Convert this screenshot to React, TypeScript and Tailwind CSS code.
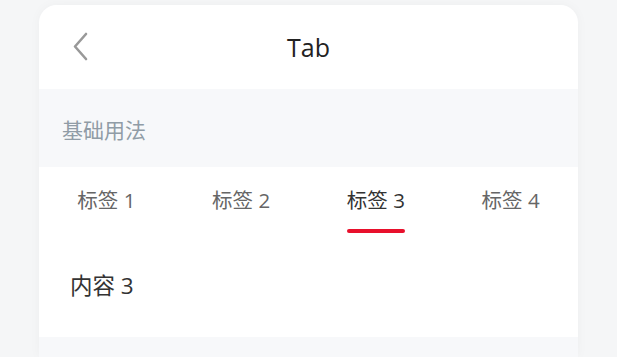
import { useState } from 'react'

const tabs = ['标签 1', '标签 2', '标签 3', '标签 4']

export default function App() {
  const [active, setActive] = useState(2)

  return (
    <div
      className="min-h-[357px] bg-[#f5f6f7] px-[39px] pt-[5px]"
      style={{ fontFamily: '"Open Sans", "Noto Sans CJK SC", sans-serif' }}
    >
      <div className="overflow-hidden rounded-t-[18px] bg-[#f7f8fa] shadow-[0_0_12px_rgba(0,0,0,0.035)]">
        <header className="relative flex h-[84px] items-center justify-center bg-white">
          <button className="absolute left-[33px] top-[27px] block">
            <svg className="block" width="16" height="29" viewBox="0 0 16 29" fill="none">
              <path
                d="M14 2 L3 14.5 L14 27"
                stroke="#999"
                strokeWidth="2.6"
                strokeLinecap="round"
                strokeLinejoin="round"
              />
            </svg>
          </button>
          <h1 className="text-[25px] font-medium leading-none text-[#222]">Tab</h1>
        </header>

        <section className="flex h-[78px] items-center px-[23px] pt-[6px] text-[21px] text-[#909ca6]">
          基础用法
        </section>

        <section className="bg-white">
          <div className="flex h-[72px]">
            {tabs.map((tab, i) => (
              <button
                key={tab}
                onClick={() => setActive(i)}
                className="flex flex-1 flex-col items-center pt-[20px]"
              >
                <span
                  className={`relative text-[20.5px] leading-[26px] ${
                    i === active ? 'text-[#333]' : 'text-[#666]'
                  }`}
                >
                  {tab}
                  {i === active && (
                    <span className="absolute left-0 right-0 top-[42px] h-[4px] rounded-full bg-[#e8102c]" />
                  )}
                </span>
              </button>
            ))}
          </div>
          <div className="flex h-[98px] items-start px-[31px] pt-[32px] text-[22.5px] leading-[30px] text-[#333]">
            内容 {active + 1}
          </div>
        </section>

        <div className="h-[20px]" />
      </div>
    </div>
  )
}
